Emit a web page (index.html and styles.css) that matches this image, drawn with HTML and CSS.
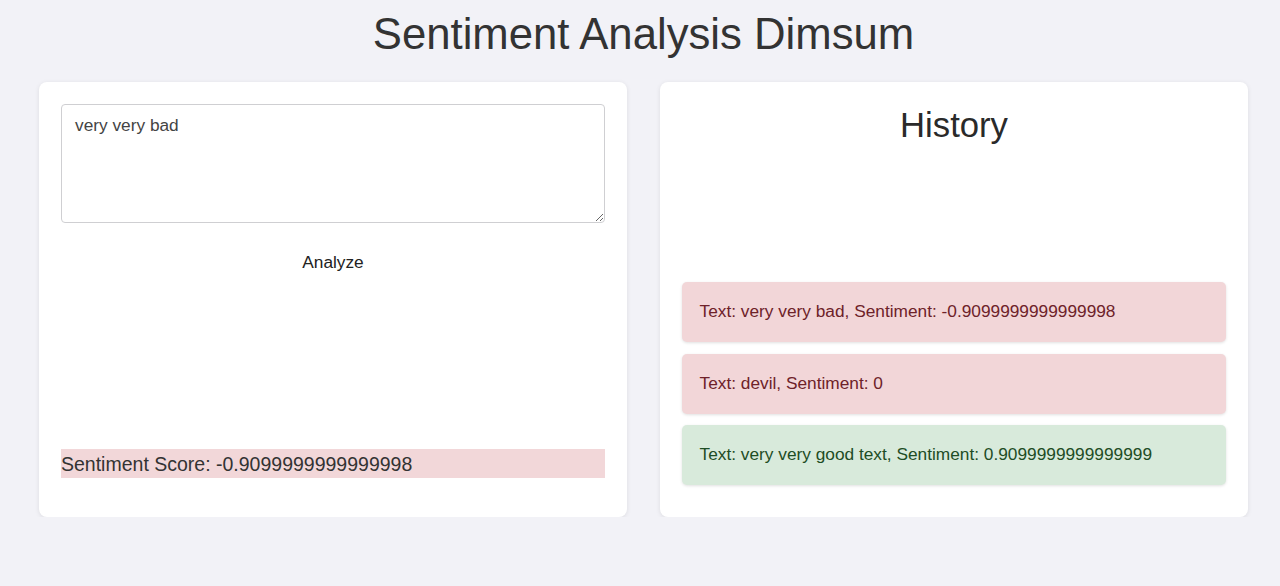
FILE: index.html
```html
<!DOCTYPE html>
<html lang="en">
<head>
<meta charset="utf-8">
<title>Sentiment Analysis Dimsum</title>
<link rel="stylesheet" href="styles.css">
</head>
<body>
<div class="page">
  <h1 class="title">Sentiment Analysis Dimsum</h1>
  <main class="panels">
    <section class="card card-input">
      <textarea class="text-input">very very bad</textarea>
      <button class="analyze-btn" type="button">Analyze</button>
      <div class="chart-area"></div>
      <div class="score score-negative">Sentiment Score: -0.9099999999999998</div>
    </section>
    <section class="card card-history">
      <h2 class="history-title">History</h2>
      <div class="history-chart"></div>
      <ul class="history-list">
        <li class="history-item negative">Text: very very bad, Sentiment: -0.9099999999999998</li>
        <li class="history-item negative">Text: devil, Sentiment: 0</li>
        <li class="history-item positive">Text: very very good text, Sentiment: 0.9099999999999999</li>
      </ul>
    </section>
  </main>
</div>
</body>
</html>
```

FILE: styles.css
```css
* {
  box-sizing: border-box;
}

body {
  margin: 0;
  background: #f2f2f7;
  font-family: "Liberation Sans", Arial, sans-serif;
  color: #333;
}

.page {
  padding: 9px 32px 0 39px;
}

.title {
  margin: 0 0 23px;
  text-align: center;
  font-size: 43.7px;
  font-weight: normal;
  line-height: 50px;
  color: #333;
}

.panels {
  display: flex;
  gap: 33px;
  align-items: stretch;
}

.card {
  flex: 0 0 588px;
  background: #fff;
  border-radius: 8px;
  box-shadow: 0 1px 5px rgba(0, 0, 0, 0.09);
  display: flex;
  flex-direction: column;
}

.card-input {
  padding: 22px 22px 39px;
}

.card-history {
  padding: 22px 22px 32px;
}

.text-input {
  display: block;
  width: 100%;
  height: 119px;
  margin: 0;
  padding: 10px 13px;
  border: 1px solid #cfcfd2;
  border-radius: 4px;
  font-family: "Liberation Sans", Arial, sans-serif;
  font-size: 17.3px;
  line-height: normal;
  color: #444;
  background: #fff;
  resize: vertical;
}

.analyze-btn {
  display: block;
  margin: 19px auto 0;
  padding: 10px 12px;
  border: none;
  background: transparent;
  font-family: "Liberation Sans", Arial, sans-serif;
  font-size: 17.3px;
  line-height: normal;
  color: #222;
  cursor: pointer;
}

.chart-area {
  flex: 1;
  min-height: 150px;
}

.score {
  padding: 3.5px 0;
  font-size: 19.5px;
  line-height: 22px;
  color: #333;
}

.score-negative {
  background: #f2d7d9;
}

.history-title {
  margin: 0;
  text-align: center;
  font-size: 34.7px;
  font-weight: normal;
  line-height: 42px;
  color: #2a2a2a;
}

.history-chart {
  height: 136px;
}

.history-list {
  list-style: none;
  margin: 0;
  padding: 0;
  display: flex;
  flex-direction: column;
  gap: 11.5px;
}

.history-item {
  padding: 20.25px 17.5px;
  border-radius: 5px;
  font-size: 17.3px;
  line-height: 19.5px;
  box-shadow: 0 1px 3px rgba(0, 0, 0, 0.12);
}

.history-item.negative {
  background: #f2d6d8;
  color: #6e2229;
}

.history-item.positive {
  background: #d8eadb;
  color: #1e4d25;
}
```
